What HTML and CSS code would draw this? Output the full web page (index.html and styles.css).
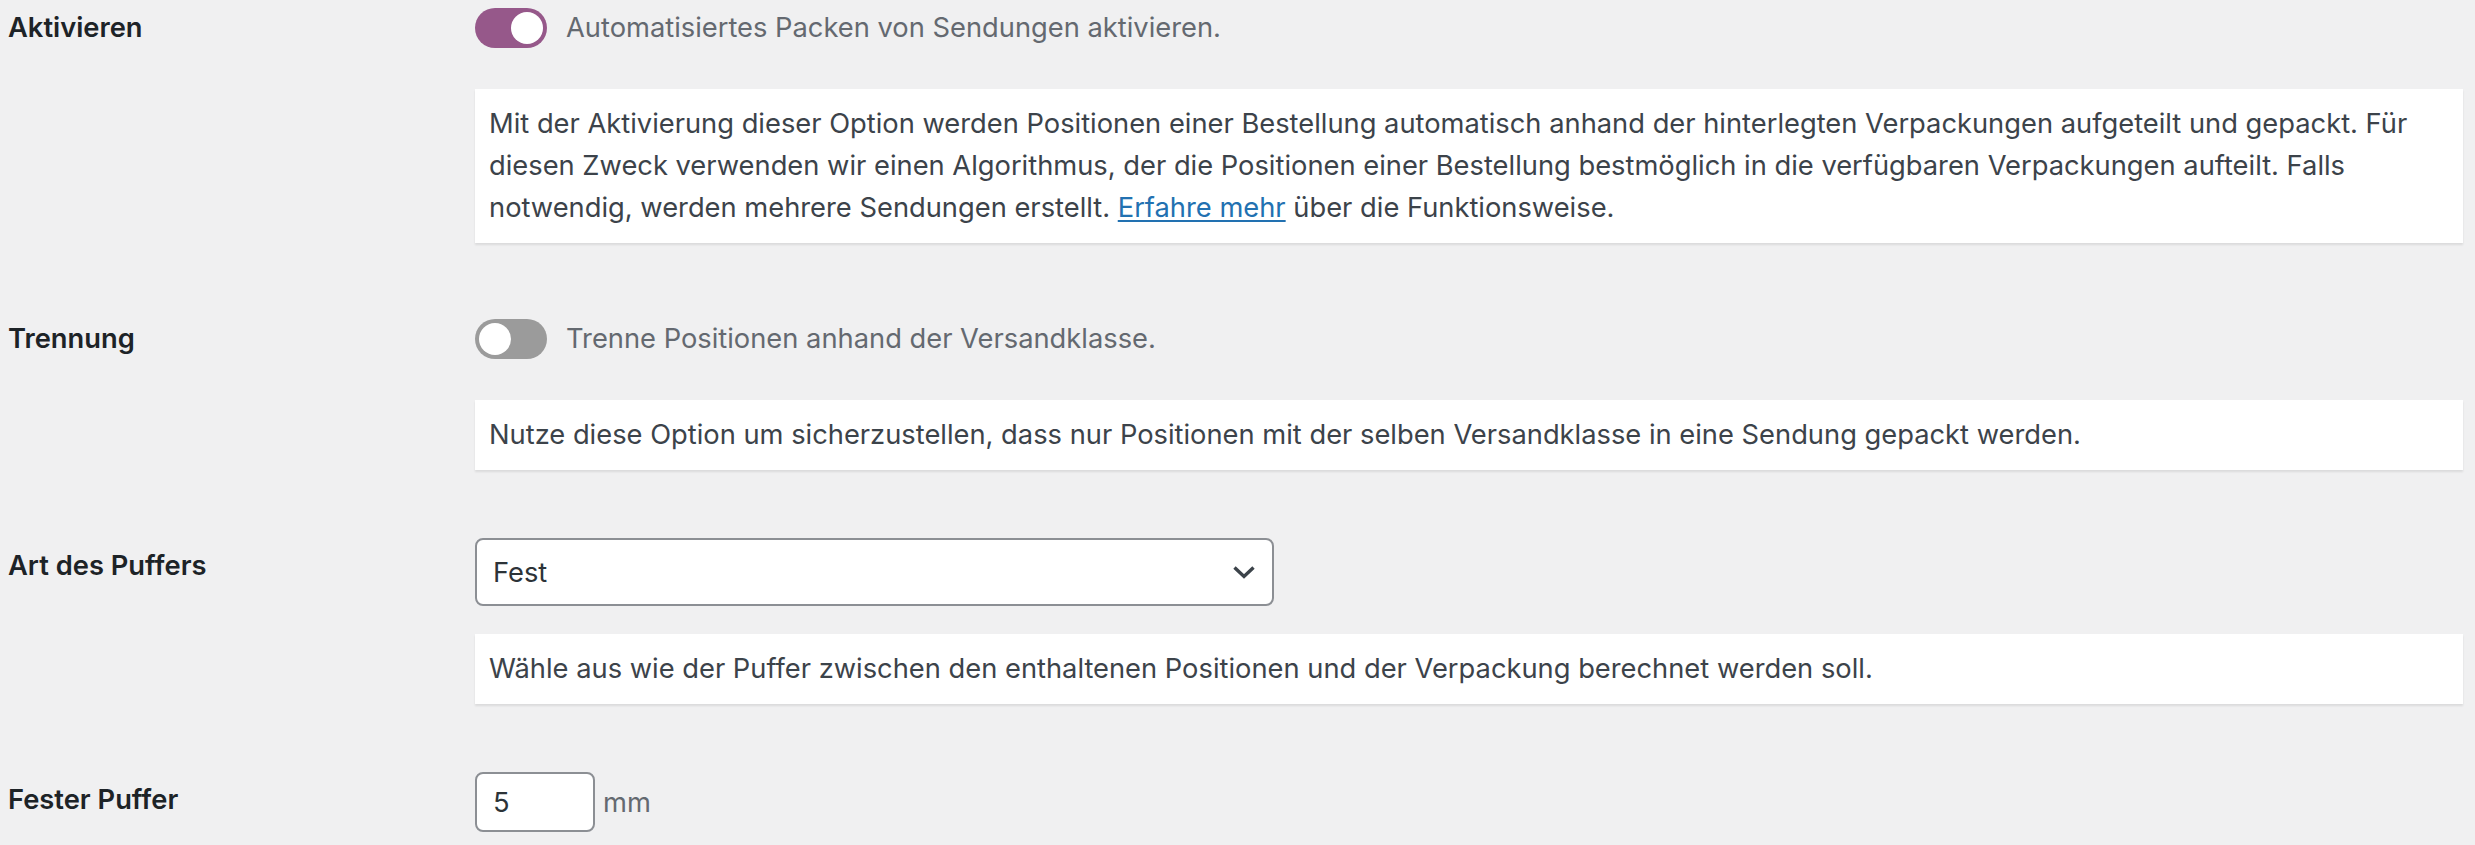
FILE: index.html
```html
<!DOCTYPE html>
<html lang="de">
<head>
<meta charset="utf-8">
<title>Verpackung</title>
<link rel="stylesheet" href="styles.css">
</head>
<body>
<div class="form">
  <div class="row">
    <div class="label">Aktivieren</div>
    <div class="field">
      <div class="toggle-line">
        <span class="toggle on"><span class="knob"></span></span>
        <span class="toggle-text">Automatisiertes Packen von Sendungen aktivieren.</span>
      </div>
      <div class="desc after-toggle">Mit der Aktivierung dieser Option werden Positionen einer Bestellung automatisch anhand der hinterlegten Verpackungen aufgeteilt und gepackt. Für diesen Zweck verwenden wir einen Algorithmus, der die Positionen einer Bestellung bestmöglich in die verfügbaren Verpackungen aufteilt. Falls notwendig, werden mehrere Sendungen erstellt. <a href="#" class="link">Erfahre mehr</a> über die Funktionsweise.</div>
    </div>
  </div>
  <div class="row">
    <div class="label">Trennung</div>
    <div class="field">
      <div class="toggle-line">
        <span class="toggle off"><span class="knob"></span></span>
        <span class="toggle-text">Trenne Positionen anhand der Versandklasse.</span>
      </div>
      <div class="desc after-toggle">Nutze diese Option um sicherzustellen, dass nur Positionen mit der selben Versandklasse in eine Sendung gepackt werden.</div>
    </div>
  </div>
  <div class="row">
    <div class="label">Art des Puffers</div>
    <div class="field">
      <div class="select">
        <span class="select-value">Fest</span>
        <svg class="chevron" width="22" height="13" viewBox="0 0 22 13"><polyline points="1.5,1.5 11,10.5 20.5,1.5" fill="none" stroke="#3c434a" stroke-width="3.4"/></svg>
      </div>
      <div class="desc after-select">Wähle aus wie der Puffer zwischen den enthaltenen Positionen und der Verpackung berechnet werden soll.</div>
    </div>
  </div>
  <div class="row">
    <div class="label">Fester Puffer</div>
    <div class="field">
      <div class="input-line">
        <span class="input">5</span>
        <span class="unit">mm</span>
      </div>
    </div>
  </div>
</div>
</body>
</html>
```
FILE: styles.css
```css
html, body {
  margin: 0;
  padding: 0;
  background: #f0f0f1;
}
body {
  font-family: Inter, "Noto Sans", sans-serif;
  font-size: 27.3px;
  color: #3c434a;
  overflow: hidden;
}
.form {
  display: flex;
  flex-direction: column;
  gap: 68px;
  padding: 0 12px 0 8px;
}
.row {
  display: grid;
  grid-template-columns: 467px 1fr;
}
.label {
  font-weight: 600;
  color: #1d2327;
  line-height: 56px;
}
.field {
  display: flex;
  flex-direction: column;
  align-items: flex-start;
}
.toggle-line {
  display: flex;
  align-items: center;
  gap: 19px;
  padding-top: 8px;
  margin-bottom: 41px;
}
.toggle {
  width: 72px;
  height: 40px;
  border-radius: 20px;
  box-sizing: border-box;
  padding: 4px;
  display: flex;
}
.toggle.on {
  background: #96588a;
  justify-content: flex-end;
}
.toggle.off {
  background: #9b9b9b;
  justify-content: flex-start;
}
.knob {
  width: 32px;
  height: 32px;
  border-radius: 50%;
  background: #fff;
}
.toggle-text {
  color: #646970;
  line-height: 40px;
}
.desc {
  align-self: stretch;
  background: #fff;
  padding: 14px 14px 14px 14px;
  line-height: 42px;
  box-shadow: 0 2px 2px rgba(0, 0, 0, 0.09);
}
.after-select {
  margin-top: 28px;
}
.link {
  color: #2271b1;
  text-decoration: underline;
  text-underline-offset: 3px;
  text-decoration-thickness: 2px;
}
.select {
  width: 799px;
  height: 68px;
  box-sizing: border-box;
  border: 2px solid #8c8f94;
  border-radius: 8px;
  background: #fff;
  display: flex;
  align-items: center;
  justify-content: space-between;
  padding: 0 17px 0 16px;
  color: #2c3338;
}
.chevron {
  display: block;
}
.input-line {
  display: flex;
  align-items: center;
  gap: 8px;
}
.input {
  width: 120px;
  height: 60px;
  box-sizing: border-box;
  border: 2px solid #8c8f94;
  border-radius: 8px;
  background: #fff;
  padding: 0 16px;
  display: flex;
  align-items: center;
  color: #2c3338;
}
.unit {
  color: #646970;
}
```
